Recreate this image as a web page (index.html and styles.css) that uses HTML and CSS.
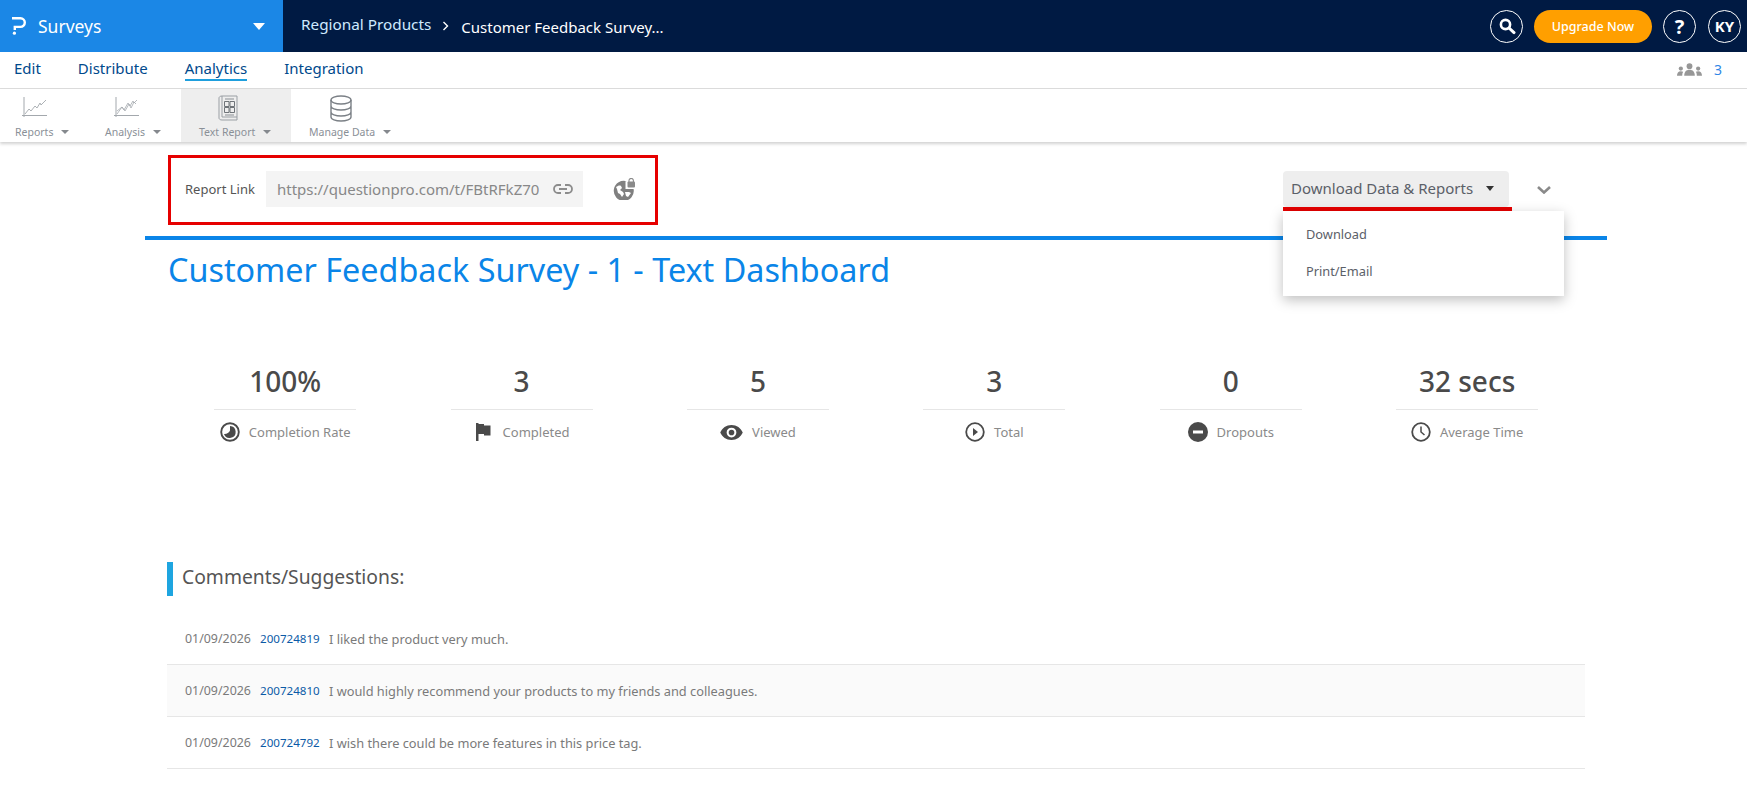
FILE: index.html
```html
<!DOCTYPE html>
<html lang="en">
<head>
<meta charset="utf-8">
<title>Customer Feedback Survey - 1 - Text Dashboard</title>
<link rel="stylesheet" href="styles.css">
</head>
<body>
<header class="topbar">
  <div class="brand">
    <svg class="logo" viewBox="0 0 14 18"><path d="M0 1.300h8.500a4.300 4.300 0 0 1 0 8.600H2.800v3" fill="none" stroke="#fff" stroke-width="2.400"/><circle cx="2.400" cy="16.200" r="1.600" fill="#fff"/></svg>
    <span class="brand-name">Surveys</span>
    <span class="brand-caret"></span>
  </div>
  <nav class="crumbs">
    <span class="crumb-a">Regional Products</span>
    <svg class="crumb-sep" viewBox="0 0 8 10"><path d="M1.500 1l4 4-4 4" fill="none" stroke="#fff" stroke-width="1.400"/></svg>
    <span class="crumb-b">Customer Feedback Survey...</span>
  </nav>
  <div class="top-actions">
    <button class="circle"><svg viewBox="0 0 18 18" class="circle-icon"><circle cx="7.500" cy="7.500" r="4.600" fill="none" stroke="#fff" stroke-width="2.600"/><path d="M11 11l5 4.600" stroke="#fff" stroke-width="3" stroke-linecap="round"/></svg></button>
    <button class="upgrade">Upgrade Now</button>
    <button class="circle circle-text">?</button>
    <button class="circle circle-text circle-ky">KY</button>
  </div>
</header>

<div class="tabs">
  <a class="tab">Edit</a>
  <a class="tab">Distribute</a>
  <a class="tab tab-active">Analytics</a>
  <a class="tab">Integration</a>
  <div class="collab">
    <svg viewBox="0 0 26 13" class="collab-icon"><g fill="#979797"><circle cx="13" cy="3" r="3"/><path d="M7.500 13c0-4 2-6.200 5.500-6.200s5.500 2.200 5.500 6.200z"/><circle cx="4" cy="5.500" r="2.200"/><path d="M0 13c0-3 1.300-4.800 4-4.800 1 0 1.800.2 2.400.7-.7 1-1 2.400-1 4.100z"/><circle cx="22" cy="5.500" r="2.200"/><path d="M26 13c0-3-1.300-4.800-4-4.800-1 0-1.800.2-2.400.7.7 1 1 2.400 1 4.100z"/></g></svg>
    <span class="collab-count">3</span>
  </div>
</div>

<div class="toolbar">
  <div class="tool tool-reports">
    <svg class="tool-icon" viewBox="0 0 26 21"><path d="M2 0v20M0 18.500h25" fill="none" stroke="#a3a8ad"/><path d="M3 17l4-5 2 2 4-5 2 2 3-5 1 2 5-5" fill="none" stroke="#a3a8ad" stroke-width=".9"/></svg>
    <span class="tool-label">Reports<i class="tool-caret"></i></span>
  </div>
  <div class="tool tool-analysis">
    <svg class="tool-icon" viewBox="0 0 26 21"><path d="M2 0v20M0 18.500h25" fill="none" stroke="#a3a8ad"/><path d="M3 17l5-7 2 3 4-7 2 3 3-5 1 2 3-3M3 14l5-4 3 4 4-7 2 4 3-6 2 2" fill="none" stroke="#a3a8ad" stroke-width=".8"/></svg>
    <span class="tool-label">Analysis<i class="tool-caret"></i></span>
  </div>
  <div class="tool tool-text">
    <svg class="tool-icon" viewBox="0 0 20 26"><path d="M4 1h15v21H4zM4 1C2 1 1 2 1 3v20c0 1 1 2 3 2h15v-3" fill="none" stroke="#9a9fa4"/><path d="M7 4h9M7 20h9" stroke="#8a8f94"/><path d="M6.500 6.500h4.500v5H6.500zM12 6.500h4.500v5H12zM6.500 12.500h4.500v5H6.500zM12 12.500h4.500v5H12z" fill="none" stroke="#6f7479"/></svg>
    <span class="tool-label">Text Report<i class="tool-caret"></i></span>
  </div>
  <div class="tool tool-data">
    <svg class="tool-icon" viewBox="0 0 22 27"><g fill="none" stroke="#7b8086" stroke-width="1.400"><ellipse cx="11" cy="5" rx="10" ry="4"/><path d="M1 5v17c0 2.200 4.500 4 10 4s10-1.800 10-4V5M1 11c0 2.200 4.500 4 10 4s10-1.800 10-4M1 17c0 2.200 4.500 4 10 4s10-1.800 10-4"/></g></svg>
    <span class="tool-label">Manage Data<i class="tool-caret"></i></span>
  </div>
</div>

<main class="page">
  <div class="report-head">
    <div class="report-link">
      <span class="report-label">Report Link</span>
      <div class="report-url">
        <span class="url-text">https://questionpro.com/t/FBtRFkZ70</span>
        <svg class="link-icon" viewBox="0 0 20 10"><path d="M8 1H5a4 4 0 0 0 0 8h3M12 1h3a4 4 0 0 1 0 8h-3M6 5h8" fill="none" stroke="#8c8c8c" stroke-width="1.800"/></svg>
      </div>
      <svg class="globe-icon" viewBox="0 0 22 22"><path d="M14 3.400A10 10 0 1 0 20.600 11h-8.100V3.200z" fill="#808080"/><path d="M3 9c2-1 3.500-2 5-1l1 2-2 2 3 2 1 2-2 3-2-3-2-1-1-4zM12 14h4l2 1-3 4-2-1z" fill="#fff"/><rect x="14.500" y="3.500" width="7.500" height="6" rx="1" fill="#8a8a8a"/><path d="M16 4V2.600a2.200 2.200 0 0 1 4.400 0V4" fill="none" stroke="#8a8a8a" stroke-width="1.100"/></svg>
    </div>
    <div class="download-wrap">
      <button class="download-btn">Download Data &amp; Reports<i class="download-caret"></i></button>
      <div class="download-mark"></div>
      <ul class="download-menu">
        <li>Download</li>
        <li>Print/Email</li>
      </ul>
    </div>
    <svg class="chevron" viewBox="0 0 14 8"><path d="M1 1l6 5.500L13 1" fill="none" stroke="#8a8a8a" stroke-width="2.600"/></svg>
  </div>

  <div class="rule"></div>
  <h1 class="title">Customer Feedback Survey - 1 - Text Dashboard</h1>

  <section class="stats">
    <div class="stat">
      <div class="stat-value">100%</div>
      <div class="stat-label"><svg class="stat-icon" viewBox="0 0 20 20"><circle cx="10" cy="10" r="8.800" fill="none" stroke="#4a4a4a" stroke-width="1.900"/><path d="M10 4a6 6 0 1 1-6 8c2.500.3 5-1 6-3.500z" fill="#4a4a4a"/></svg>Completion Rate</div>
    </div>
    <div class="stat">
      <div class="stat-value">3</div>
      <div class="stat-label"><svg class="stat-icon" viewBox="0 0 20 20"><path d="M2 1h2.500v18H2z" fill="#4a4a4a"/><path d="M4 2h6v1.500h6.500v10H10V12H4z" fill="#4a4a4a"/></svg>Completed</div>
    </div>
    <div class="stat">
      <div class="stat-value">5</div>
      <div class="stat-label"><svg class="stat-icon stat-icon-wide" viewBox="0 0 24 16"><path fill-rule="evenodd" d="M12 0C6.500 0 2 3.300 0 8c2 4.700 6.500 8 12 8s10-3.300 12-8c-2-4.700-6.500-8-12-8zm0 13.200a5.200 5.200 0 1 1 0-10.400 5.200 5.200 0 0 1 0 10.400zM12 5a3 3 0 1 0 0 6 3 3 0 0 0 0-6z" fill="#4a4a4a"/></svg>Viewed</div>
    </div>
    <div class="stat">
      <div class="stat-value">3</div>
      <div class="stat-label"><svg class="stat-icon" viewBox="0 0 20 20"><circle cx="10" cy="10" r="8.800" fill="none" stroke="#4a4a4a" stroke-width="1.800"/><path d="M8 6l5 4-5 4z" fill="#4a4a4a"/></svg>Total</div>
    </div>
    <div class="stat">
      <div class="stat-value">0</div>
      <div class="stat-label"><svg class="stat-icon" viewBox="0 0 20 20"><circle cx="10" cy="10" r="10" fill="#4a4a4a"/><rect x="5" y="8.500" width="10" height="3" fill="#fff"/></svg>Dropouts</div>
    </div>
    <div class="stat">
      <div class="stat-value">32 secs</div>
      <div class="stat-label"><svg class="stat-icon" viewBox="0 0 20 20"><circle cx="10" cy="10" r="8.800" fill="none" stroke="#4a4a4a" stroke-width="1.800"/><path d="M10 4.500V10l3.500 3" fill="none" stroke="#4a4a4a" stroke-width="1.500"/></svg>Average Time</div>
    </div>
  </section>

  <section class="comments">
    <h2 class="comments-title">Comments/Suggestions:</h2>
    <div class="comment">
      <span class="c-date">01/09/2026</span><a class="c-id">200724819</a><span class="c-text">I liked the product very much.</span>
    </div>
    <div class="comment comment-alt">
      <span class="c-date">01/09/2026</span><a class="c-id">200724810</a><span class="c-text">I would highly recommend your products to my friends and colleagues.</span>
    </div>
    <div class="comment">
      <span class="c-date">01/09/2026</span><a class="c-id">200724792</a><span class="c-text">I wish there could be more features in this price tag.</span>
    </div>
  </section>
</main>
</body>
</html>
```
FILE: styles.css
```css
* { box-sizing: border-box; }
html, body { margin: 0; padding: 0; height: 100%; overflow: hidden; }
body { font-family: "Noto Sans", "Open Sans", sans-serif; color: #555; background: #fff; }
button { font-family: inherit; border: 0; padding: 0; cursor: pointer; }

.topbar { display: flex; height: 52px; background: #001a43; }
.brand { width: 283px; background: #1b87e6; display: flex; align-items: center; padding: 0 18px 0 12px; color: #fff; }
.logo { width: 14px; height: 18px; margin-right: 12px; }
.brand-name { font-size: 17.500px; flex: 1; }
.brand-caret { width: 0; height: 0; border-left: 6.500px solid transparent; border-right: 6.500px solid transparent; border-top: 7px solid #fff; }
.crumbs { display: flex; align-items: center; padding-left: 18px; color: #fff; flex: 1; }
.crumb-a { font-size: 15.300px; color: #cfeaff; margin-bottom: 4px; }
.crumb-sep { width: 8px; height: 10px; margin: 0 11px 0 11px; }
.crumb-b { font-size: 15px; margin-top: 1px; }
.top-actions { display: flex; align-items: center; padding-right: 6px; }
.circle { width: 33px; height: 33px; border-radius: 50%; border: 1px solid #fff; background: transparent; color: #fff; display: flex; align-items: center; justify-content: center; margin-left: 11px; font-weight: 700; }
.circle-icon { width: 18px; height: 18px; }
.circle-text { font-size: 20px; }
.circle-ky { font-size: 15px; margin-left: 12px; }
.upgrade { width: 118px; height: 33px; border-radius: 17px; background: #ff9f00; color: #fff; font-size: 12.500px; font-weight: 500; margin-left: 11px; }

.tabs { height: 37px; display: flex; align-items: center; padding: 0 25px 4px 14px; border-bottom: 1px solid #ddd; gap: 37px; font-size: 15px; }
.tab { color: #00498c; padding: 3px 0 1px; border-bottom: 2px solid transparent; }
.tab-active { border-bottom-color: #1f9fdd; }
.collab { margin-left: auto; display: flex; align-items: center; gap: 12px; margin-top: 3px; }
.collab-icon { width: 25px; height: 13px; }
.collab-count { color: #2f86e6; font-size: 14px; }

.toolbar { height: 53px; display: flex; box-shadow: 0 2px 3px rgba(0,0,0,.18); position: relative; }
.tool { display: flex; flex-direction: column; align-items: flex-start; padding-bottom: 3px; }
.tool-reports { width: 90px; padding-left: 15px; }
.tool-analysis { width: 91px; padding-left: 15px; }
.tool-text { width: 110px; padding-left: 18px; background: #eee; }
.tool-data { width: 118px; padding-left: 18px; }
.tool-icon { width: 26px; height: 21px; margin-top: 8px; flex: none; }
.tool-reports .tool-icon { margin-left: 7px; }
.tool-analysis .tool-icon { margin-left: 9px; }
.tool-text .tool-icon { width: 20px; height: 26px; margin: 6px 0 0 19px; }
.tool-data .tool-icon { width: 22px; height: 27px; margin: 6px 0 0 21px; }
.tool-label { font-size: 10.500px; color: #8a9097; margin-top: auto; white-space: nowrap; display: flex; align-items: center; }
.tool-caret { width: 0; height: 0; border-left: 4px solid transparent; border-right: 4px solid transparent; border-top: 4px solid #85898e; margin-left: 8px; }

.page { padding: 0 140px 0 145px; }
.report-head { display: flex; align-items: flex-start; padding: 13px 0 0 23px; height: 94px; }
.report-link { width: 490px; height: 70px; border: 3px solid #e60000; display: flex; align-items: center; padding: 0 0 2px 14px; }
.report-label { font-size: 13px; color: #555; width: 81px; white-space: nowrap; }
.report-url { width: 317px; height: 36px; background: #f4f4f4; display: flex; align-items: center; padding-left: 11px; }
.url-text { font-size: 15px; color: #888; width: 276px; white-space: nowrap; overflow: hidden; }
.link-icon { width: 20px; height: 10px; }
.globe-icon { width: 22px; height: 22px; margin-left: 30px; }

.download-wrap { position: relative; margin: 16px 0 0 625px; width: 226px; }
.download-btn { width: 226px; height: 36px; background: #eee; border-radius: 4px; color: #5b6068; font-size: 15px; display: flex; align-items: center; padding: 0 0 2px 8px; white-space: nowrap; }
.download-caret { width: 0; height: 0; border-left: 4.500px solid transparent; border-right: 4.500px solid transparent; border-top: 5px solid #333; margin-left: 13px; }
.download-mark { position: absolute; left: 0; top: 36px; width: 229px; height: 6px; background: #e60000; }
.download-menu { position: absolute; z-index: 2; left: 0; top: 40px; width: 281px; height: 85px; margin: 0; padding: 5px 0 0 23px; list-style: none; background: #fff; box-shadow: 0 4px 12px rgba(0,0,0,.25); font-size: 12.800px; color: #5b6068; }
.download-menu li { height: 37px; line-height: 37px; }
.chevron { width: 14px; height: 8px; margin: 31px 0 0 28px; }

.rule { height: 4px; background: #0a85e8; width: 1462px; }
.title { margin: 8px 0 0 23px; font-size: 32.350px; line-height: 42px; font-weight: 400; color: #0a85e8; white-space: nowrap; }

.stats { display: grid; grid-template-columns: repeat(6, 236.4px); margin: 73px 0 0 22px; }
.stat { display: flex; flex-direction: column; align-items: center; }
.stat-value { width: 142px; height: 47px; border-bottom: 1px solid #e6e6e6; text-align: center; font-size: 28px; line-height: 36px; font-weight: 500; color: #4a4a4a; white-space: nowrap; }
.stat-label { display: flex; align-items: center; gap: 9px; margin-top: 12px; font-size: 13px; line-height: 20px; color: #8a8a8a; white-space: nowrap; }
.stat-icon { width: 20px; height: 20px; flex: none; }
.stat-icon-wide { width: 23px; height: 15px; }

.comments { margin: 0 0 0 22px; width: 1418px; }
.comments-title { margin: 120px 0 0; height: 34px; border-left: 6px solid #1ea5e0; padding-left: 9px; font-size: 19.300px; line-height: 30px; font-weight: 400; color: #555; white-space: nowrap; }
.comment { height: 52px; border-bottom: 1px solid #e6e6e6; display: flex; align-items: center; padding: 0 0 0 18px; font-size: 12.800px; color: #7a7a7a; white-space: nowrap; }
.comments-title + .comment { margin-top: 17px; }
.comment-alt { background: #fafafa; }
.c-date { width: 75px; font-size: 12.400px; }
.c-id { width: 69px; font-size: 11.600px; color: #0b5aa6; }
```
